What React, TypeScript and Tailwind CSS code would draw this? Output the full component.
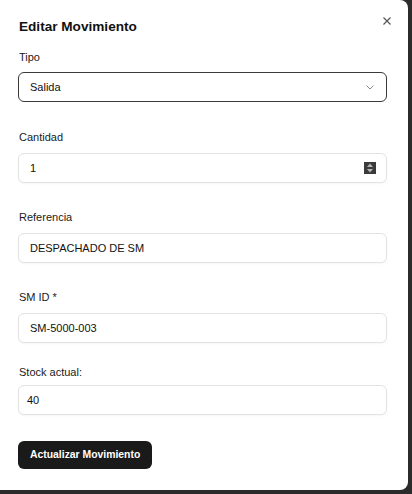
import React from 'react';

const font = { fontFamily: '"Liberation Sans", Arial, sans-serif' };

function Field({ label, children, className = '' }: { label: string; children: React.ReactNode; className?: string }) {
  return (
    <div className={className}>
      <label className="block text-[11px] leading-4 text-[#1a1a1a]">{label}</label>
      {children}
    </div>
  );
}

function TextBox({ value, pad = 'px-[11px]' }: { value: string; pad?: string }) {
  return (
    <div
      className={`flex h-[30px] items-center rounded-md border border-[#e3e3e3] bg-white ${pad} text-[11px] text-[#111] shadow-[0_1px_2px_rgba(0,0,0,0.04)]`}
    >
      {value}
    </div>
  );
}

export default function App() {
  return (
    <div className="h-[494px] w-[412px] overflow-hidden bg-[#2b2b2b]" style={font}>
      <div className="relative h-[490px] w-[408px] rounded-br-lg rounded-tr-lg bg-white pl-[18px] pr-[21px] pt-[17px]">
        {/* close */}
        <button className="absolute right-[17px] top-[17px] text-[#555]">
          <svg width="8" height="8" viewBox="0 0 8 8" fill="none" stroke="currentColor" strokeWidth="1.2">
            <path d="M0.5 0.5L7.5 7.5M7.5 0.5L0.5 7.5" />
          </svg>
        </button>

        <h2 className="pl-px text-[13.6px] font-bold leading-5 text-[#111]">Editar Movimiento</h2>

        <Field label="Tipo" className="mt-3 pl-px">
          <div className="-ml-px mt-[7px] flex h-[30px] items-center justify-between rounded-md border border-[#3a3a3a] bg-white pl-[11px] pr-[12px] text-[11px] text-[#111]">
            <span>Salida</span>
            <svg width="8" height="5" viewBox="0 0 8 5" fill="none" stroke="#888" strokeWidth="1">
              <path d="M0.5 0.5L4 4L7.5 0.5" />
            </svg>
          </div>
        </Field>

        <Field label="Cantidad" className="mt-[27px] pl-px">
          <div className="-ml-px mt-2 flex h-[30px] items-center justify-between rounded-md border border-[#e3e3e3] bg-white pl-[11px] pr-[10px] text-[11px] text-[#111] shadow-[0_1px_2px_rgba(0,0,0,0.04)]">
            <span>1</span>
            <svg width="12" height="12" viewBox="0 0 12 12">
              <rect width="12" height="12" fill="#3b3b3b" />
              <path d="M6 1.5L9 5H3Z" fill="#b5b5b5" />
              <path d="M6 10.5L9 7H3Z" fill="#b5b5b5" />
            </svg>
          </div>
        </Field>

        <Field label="Referencia" className="mt-[26px] pl-px">
          <div className="-ml-px mt-2">
            <TextBox value="DESPACHADO DE SM" />
          </div>
        </Field>

        <Field label="SM ID *" className="mt-[26px] pl-px">
          <div className="-ml-px mt-2">
            <TextBox value="SM-5000-003" />
          </div>
        </Field>

        <Field label="Stock actual:" className="mt-[21px] pl-px">
          <div className="-ml-px mt-[5px]">
            <TextBox value="40" pad="px-[8px]" />
          </div>
        </Field>

        <button className="mt-[26px] flex h-[28px] items-center rounded-md bg-[#1a1a1a] px-[12px] text-[10.4px] font-bold text-white">
          Actualizar Movimiento
        </button>
      </div>
    </div>
  );
}
